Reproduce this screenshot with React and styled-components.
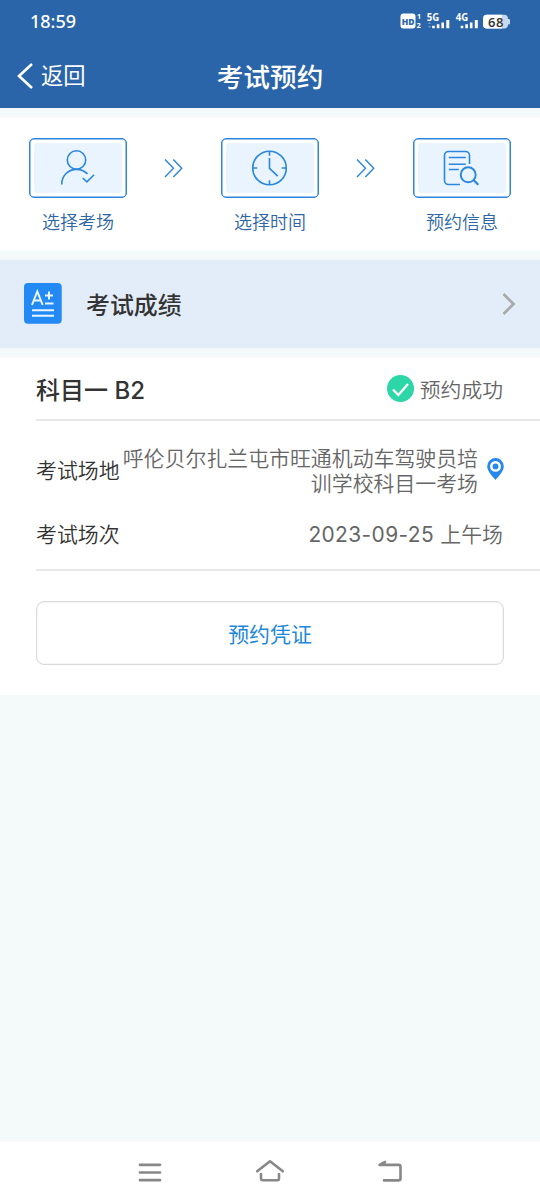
import styled, { createGlobalStyle } from "styled-components"

const GlobalStyle = createGlobalStyle`
    * {
        box-sizing: border-box;
    }
    body {
        margin: 0;
        background-color: #f4f9fa;
        font-family: Inter, "Noto Sans CJK SC", sans-serif;
        font-weight: 350;
    }
    svg {
        display: block;
        flex-shrink: 0;
    }
`
const Page = styled.div`
    width: 100%;
    height: 1204px;
    display: flex;
    flex-direction: column;
    overflow: hidden;
    white-space: nowrap;
`
const Header = styled.header`
    height: 108px;
    color: white;
    background-color: #2b65a9;
`
const StatusBar = styled.div`
    height: 42px;
    padding: 0 30px 0 30px;
    display: flex;
    align-items: center;
    justify-content: space-between;
`
const Time = styled.span`
    font-family: "Noto Sans", sans-serif;
    font-size: 18px;
    font-weight: 500;
    letter-spacing: 0;
`
const NavBar = styled.div`
    height: 66px;
    display: grid;
    grid-template-columns: 130px 1fr 130px;
    align-items: center;
`
const Back = styled.button`
    display: flex;
    align-items: center;
    gap: 8px;
    padding: 1px 0 0 17px;
    border: none;
    background: none;
    color: white;
    font-family: inherit;
    font-size: 22.3px;
    line-height: 32px;
`
const Title = styled.h1`
    margin: 3px 0 0;
    text-align: center;
    font-size: 26.7px;
    font-weight: 500;
    line-height: 36px;
`
const Steps = styled.section`
    height: 133px;
    margin-top: 9px;
    padding: 21px 29px 0;
    display: flex;
    justify-content: space-between;
    background-color: white;
`
const Step = styled.div`
    width: 98px;
    display: flex;
    flex-direction: column;
    align-items: center;
`
const StepFrame = styled.div`
    width: 98px;
    height: 60px;
    padding: 4px;
    display: flex;
    border: 1px solid #2d86dc;
    border-radius: 5px;
    box-shadow: inset 0 0 0 0.5px #2d86dc;
`
const StepInner = styled.div`
    flex: 1;
    display: flex;
    align-items: center;
    justify-content: center;
    border-radius: 4px;
    background-color: #e9f4ff;
`
const StepLabel = styled.span`
    margin-top: 11px;
    color: #2d66a5;
    font-size: 18px;
    line-height: 27px;
`
const StepArrow = styled.div`
    height: 60px;
    display: flex;
    align-items: center;
`
const Score = styled.section`
    height: 88px;
    margin: 10px 0 9px;
    padding: 0 24px;
    display: flex;
    align-items: center;
    background-color: #e2edf9;
`
const ScoreTitle = styled.h2`
    flex: 1;
    margin: 4px 0 0 24px;
    color: #333;
    font-size: 23.9px;
    font-weight: 500;
    line-height: 36px;
`
const Card = styled.section`
    height: 338px;
    padding-left: 36px;
    background-color: white;
`
const CardHead = styled.div`
    height: 64px;
    padding: 0 37px 0 0;
    display: flex;
    align-items: center;
    justify-content: space-between;
    border-bottom: 2px solid #e8e8e8;
`
const Subject = styled.h2`
    margin: 5px 0 0;
    color: #333;
    font-size: 24px;
    font-weight: 500;
    line-height: 36px;
`
const Status = styled.div`
    display: flex;
    align-items: center;
    gap: 6px;
    color: #666;
    font-size: 20.8px;
    line-height: 30px;
`
const StatusText = styled.span`
    padding-top: 5px;
`
const Details = styled.div`
    height: 150px;
    padding: 23px 37px 0 0;
    border-bottom: 2px solid #e8e8e8;
`
const DetailRow = styled.div`
    height: ${props => props.$height};
    display: flex;
    align-items: center;
    justify-content: space-between;
    color: #666;
    font-size: 20.9px;
`
const Label = styled.span`
    color: #333;
`
const Place = styled.div`
    display: flex;
    align-items: center;
    gap: 9px;
    margin-right: -1px;
    text-align: right;
    line-height: 25px;
`
const PlaceName = styled.div`
    padding-top: 4px;
`
const DateText = styled.span`
    font-weight: 400;
    letter-spacing: 0.4px;
`
const Voucher = styled.button`
    width: 468px;
    height: 64px;
    margin-top: 30px;
    padding: 0 0 1px;
    display: block;
    border: 1px solid #dadada;
    border-radius: 8px;
    box-shadow: inset 0 0 0 0.5px #eee;
    background-color: white;
    color: #1e88d8;
    font-family: inherit;
    font-size: 20.9px;
`
const SystemNav = styled.nav`
    height: 63px;
    margin-top: auto;
    padding: 0 136px 2px;
    display: flex;
    align-items: center;
    justify-content: space-between;
    background-color: white;
`

const StatusIcons = () => (
    <svg width="110" height="20" viewBox="400 11 110 20" fill="white" fontFamily="Open Sans, sans-serif">
        <rect x="400.5" y="13.5" width="15" height="15" rx="3" />
        <text x="401.7" y="24.7" fontSize="9.5" fontWeight="800" fill="#2b65a9" textLength="12.8" lengthAdjust="spacingAndGlyphs">HD</text>
        <text x="417" y="19" fontSize="7" fontWeight="700">1</text>
        <text x="416.6" y="28.3" fontSize="7.5" fontWeight="700">2</text>
        <text x="426.8" y="21" fontSize="10.5" fontWeight="700" textLength="12.5" lengthAdjust="spacingAndGlyphs">5G</text>
        <path d="M427.7 24l1.8-2 1.8 2zM427.7 26l1.8 2 1.8-2z" opacity="0.3" />
        <path d="M432.2 25.7h2.6v2.6h-2.6zM436.8 24.2h2.6v4.1h-2.6zM441.4 22.5h2.6v5.8h-2.6zM446.3 20h3v8.3h-3z" />
        <text x="455.7" y="21" fontSize="10.5" fontWeight="700" textLength="12.5" lengthAdjust="spacingAndGlyphs">4G</text>
        <path d="M460.7 25.7h2.6v2.6h-2.6zM465.3 24.2h2.6v4.1h-2.6zM469.9 22.5h2.6v5.8h-2.6zM474.8 20h3v8.3h-3z" />
        <rect x="483" y="14.8" width="25" height="13.8" rx="4" fill="#c8d8f0" />
        <path d="M487 14.8h15v13.8h-15a4 4 0 0 1-4-4v-5.8a4 4 0 0 1 4-4z" />
        <path d="M508 19h1a1 1 0 0 1 1 1v3.500a1 1 0 0 1-1 1h-1z" fill="#c8d8f0" />
        <text x="488" y="26.500" fontSize="13" fontWeight="600" fill="#333" textLength="15.500">68</text>
    </svg>
)

const Stroke = ({ color = "#2b86dd", weight = 1.6, ...props }) => (
    <svg fill="none" stroke={color} strokeWidth={weight} {...props} />
)

const PersonIcon = () => (
    <Stroke width="36" height="38" viewBox="60 149 36 38">
        <circle cx="76.500" cy="160" r="9.200" />
        <path d="M61.800 184.500v-.8c0-8 6.500-14.300 14.700-14.300 4.500 0 8.300 1.800 11 4.500M82.700 178l4.200 3.800 7.200-7" />
    </Stroke>
)

const ClockIcon = () => (
    <Stroke width="38" height="38" viewBox="251 149 38 38">
        <circle cx="269.500" cy="168" r="16.800" />
        <path d="M269.500 151.500v4.300M269.500 180.200v4.300M253 168h4.300M281.700 168h4.300M269.500 158v10.300l8.200 7.900" />
    </Stroke>
)

const SearchDocIcon = () => (
    <Stroke width="38" height="38" viewBox="443.500 149 38 38">
        <path d="M460.500 184.500h-11.500a4 4 0 0 1-4-4v-25a4 4 0 0 1 4-4h17a4 4 0 0 1 4 4V164M449.300 157.500h17M449.300 164.300h17M449.300 169.500h10" />
        <path d="M474 180l4.800 4.800" strokeWidth="2.200" />
        <circle cx="468.700" cy="174.800" r="7.500" strokeWidth="1.900" />
    </Stroke>
)

const DoubleArrow = () => (
    <Stroke width="20" height="20" viewBox="0.500 0 20 20" weight="1.400">
        <path d="M1.500 1.500l8.500 8.700-8.500 8.700M9.800 1.500l8.500 8.700-8.500 8.700" />
    </Stroke>
)

const steps = [
    { name: "选择考场", icon: <PersonIcon /> },
    { name: "选择时间", icon: <ClockIcon /> },
    { name: "预约信息", icon: <SearchDocIcon /> },
]

const App = () => {
  return (
      <Page>
          <GlobalStyle />
          <Header>
              <StatusBar>
                  <Time>18:59</Time>
                  <StatusIcons />
              </StatusBar>
              <NavBar>
                  <Back>
                      <Stroke width="16" height="26" viewBox="0 0 16 26" color="white" weight="2.600">
                          <path d="M15 1L2 13l13 12" />
                      </Stroke>
                      返回
                  </Back>
                  <Title>考试预约</Title>
              </NavBar>
          </Header>
          <Steps>
              {steps.map((item, index) => [
                  index > 0 && <StepArrow key={index}><DoubleArrow /></StepArrow>,
                  <Step key={item.name}>
                      <StepFrame>
                          <StepInner>{item.icon}</StepInner>
                      </StepFrame>
                      <StepLabel>{item.name}</StepLabel>
                  </Step>
              ])}
          </Steps>
          <Score>
              <svg width="38" height="42" viewBox="0 0 38 42">
                  <rect width="37.700" height="40.700" rx="4" fill="#2289f5" />
                  <path d="M8 22l5.300-13.500L18.700 22M9.800 17.500h7M21 12.500h8M25 8.500v8M21 20.500h8.500M8 27.200h22M8 32.700h22" fill="none" stroke="#e9f5ff" strokeWidth="2" />
              </svg>
              <ScoreTitle>考试成绩</ScoreTitle>
              <Stroke width="14" height="22" viewBox="0 0 14 22" color="#aaa" weight="2.800">
                  <path d="M1.500 1l10 10-10 10" />
              </Stroke>
          </Score>
          <Card>
              <CardHead>
                  <Subject>科目一 B2</Subject>
                  <Status>
                      <svg width="27" height="27" viewBox="0 0 27 27">
                          <circle cx="13.500" cy="13.500" r="13.500" fill="#2cd6a7" />
                          <path d="M6 14.500l5.300 5.500 9.700-11" fill="none" stroke="white" strokeWidth="2.300" />
                      </svg>
                      <StatusText>预约成功</StatusText>
                  </Status>
              </CardHead>
              <Details>
                  <DetailRow $height="50px">
                      <Label>考试场地</Label>
                      <Place>
                          <PlaceName>呼伦贝尔扎兰屯市旺通机动车驾驶员培<br />训学校科目一考场</PlaceName>
                          <svg width="17" height="22" viewBox="0 0 17 22">
                              <path d="M8.500 0a8.300 8.300 0 0 1 8.300 8.300c0 4.700-4.600 9.500-8.300 13.700C4.800 17.800.2 13 .2 8.300A8.300 8.300 0 0 1 8.500 0z" fill="#2688ec" />
                              <circle cx="8.500" cy="8.400" r="4.200" fill="#2688ec" stroke="white" strokeWidth="2.500" />
                          </svg>
                      </Place>
                  </DetailRow>
                  <DetailRow $height="77px">
                      <Label>考试场次</Label>
                      <span><DateText>2023-09-25 </DateText>上午场</span>
                  </DetailRow>
              </Details>
              <Voucher>预约凭证</Voucher>
          </Card>
          <SystemNav>
              <Stroke width="28" height="26" viewBox="136 1159 28 26" color="#888" weight="2.700" strokeLinecap="round">
                  <path d="M140 1164.800h20M140 1172.500h20M140 1180.200h20" />
              </Stroke>
              <Stroke width="30" height="26" viewBox="255 1159 30 26" color="#888" weight="2.600" strokeLinecap="round" strokeLinejoin="round">
                  <path d="M257.200 1171.300l12.800-10 12.800 10M261 1174v4.500a1.700 1.700 0 0 0 1.700 1.700h14.600a1.700 1.700 0 0 0 1.700-1.700V1174" />
              </Stroke>
              <Stroke width="28" height="26" viewBox="376 1159 28 26" color="#888" weight="2.600" strokeLinecap="round" strokeLinejoin="round">
                  <path d="M385 1162l-5.500 2.900h19a2 2 0 0 1 2 2v11.500a2 2 0 0 1-2 2H384" />
              </Stroke>
          </SystemNav>
      </Page>
  )
};

export default App;
